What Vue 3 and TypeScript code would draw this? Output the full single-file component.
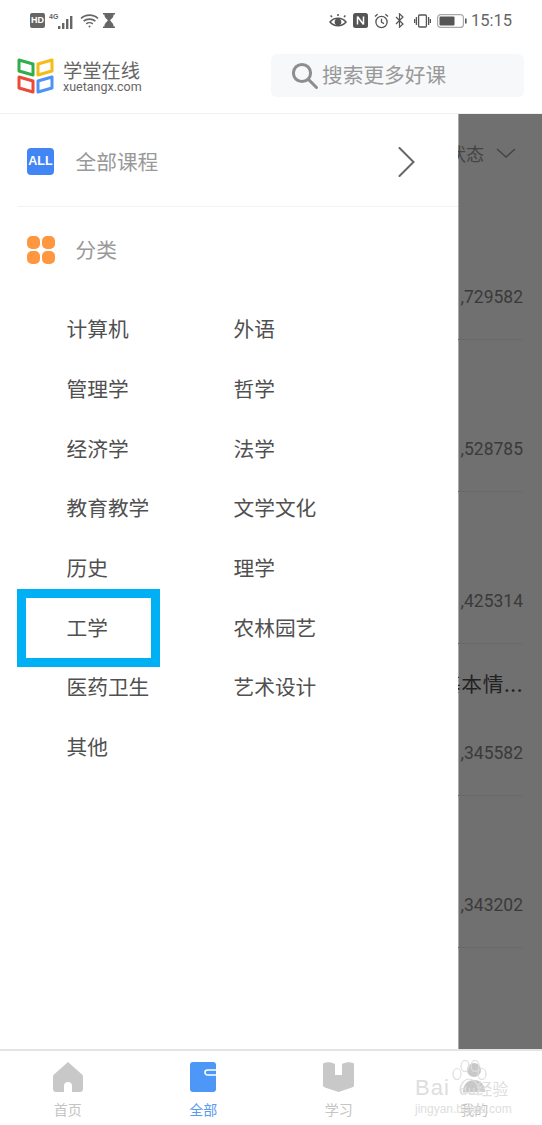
<template>
  <div class="page">
    <div class="status-bar">
      <div class="status-left">
        <span class="hd">HD</span>
        <svg class="signal" width="27" height="18" viewBox="0 0 27 18">
          <text x="0" y="7" class="net">4G</text>
          <rect x="9" y="14" width="2.4" height="3" /><rect x="13" y="11" width="2.4" height="6" />
          <rect x="17" y="7" width="2.4" height="10" /><rect x="21" y="4" width="2.4" height="13" />
        </svg>
        <svg width="19" height="16" viewBox="0 0 19 16" fill="none" stroke="#666" stroke-width="1.6">
          <path d="M1 5.5C5.5 1 13.5 1 18 5.5" /><path d="M3.6 8.2C6.6 5.4 12.4 5.4 15.4 8.2" />
          <path d="M6.2 10.8C8 9.4 11 9.4 12.8 10.8" /><circle cx="9.5" cy="13.6" r="1" fill="#666" stroke="none" />
        </svg>
        <svg width="12" height="15" viewBox="0 0 12 15" fill="#666">
          <path d="M0 0H12V1.6H10.6C10.6 5 8 6 7.2 7.5 8 9 10.6 10 10.6 13.4H12V15H0V13.4H1.4C1.4 10 4 9 4.8 7.5 4 6 1.4 5 1.4 1.6H0Z" />
        </svg>
      </div>
      <div class="status-right">
        <svg width="18" height="14" viewBox="0 0 18 14" fill="none" stroke="#555" stroke-width="1.5">
          <path d="M1 8C5 3 13 3 17 8 13 13 5 13 1 8Z" /><circle cx="9" cy="8" r="2.6" fill="#555" />
          <path d="M3 3 1.6 1.4M9 2V0M15 3l1.4-1.6" />
        </svg>
        <svg width="15" height="15" viewBox="0 0 15 15">
          <rect width="15" height="15" rx="2.5" fill="#555" />
          <path d="M4.5 3.5V11.5M4.5 3.5 10.5 11.5M10.5 3.5V11.5" stroke="#fff" stroke-width="1.5" fill="none" />
        </svg>
        <svg width="15" height="16" viewBox="0 0 15 16" fill="none" stroke="#555" stroke-width="1.3">
          <circle cx="7.5" cy="9" r="5.6" /><path d="M7.5 5.8V9.2L10 10.6M1 3.6 3.6 1.2M14 3.6 11.4 1.2" />
        </svg>
        <svg width="9" height="15" viewBox="0 0 9 15" fill="none" stroke="#555" stroke-width="1.2">
          <path d="M1 4 8 11 4.5 14.2V.8L8 4 1 11" />
        </svg>
        <svg class="vibrate" width="17" height="14" viewBox="0 0 17 14" fill="none" stroke="#555" stroke-width="1.3">
          <rect x="4.6" y="1" width="7.8" height="12" rx="1" /><path d="M2.4 3V11M.6 5V9M14.6 3V11M16.4 5V9" />
        </svg>
        <svg width="30" height="14" viewBox="0 0 30 14">
          <rect x=".6" y=".6" width="25.8" height="12.8" rx="3" fill="none" stroke="#aaa" stroke-width="1.2" />
          <rect x="2.5" y="2.5" width="15" height="9" rx="1" fill="#555" />
          <rect x="28" y="4.5" width="1.6" height="5" fill="#555" />
        </svg>
        <span class="time">15:15</span>
      </div>
    </div>

    <header class="top-bar">
      <div class="logo">
        <svg width="37" height="37" viewBox="0 0 37 37" fill="none" stroke-width="3" stroke-linejoin="round">
          <path d="M2 3 16 7V18L2 14Z" stroke="#2fae4a" />
          <path d="M21 7 35 3V14L21 18Z" stroke="#f6bb16" />
          <path d="M2 20 16 24V35L2 31Z" stroke="#ec4a36" />
          <path d="M21 24 35 20V31L21 35Z" stroke="#4d93f5" />
        </svg>
        <div class="logo-text">
          <div class="logo-cn">学堂在线</div>
          <div class="logo-en">xuetangx.com</div>
        </div>
      </div>
      <div class="search">
        <svg width="29" height="29" viewBox="0 0 29 29" fill="none" stroke="#8e8e8e" stroke-width="3">
          <circle cx="12" cy="12" r="8.6" /><path d="M18.4 18.4 26.5 26.5" stroke-linecap="round" />
        </svg>
        <span class="search-text">搜索更多好课</span>
      </div>
    </header>

    <div class="main">
      <aside class="drawer">
        <div class="all-row">
          <span class="all-icon">ALL</span>
          <span class="row-title">全部课程</span>
          <svg class="chevron" width="17" height="30" viewBox="0 0 17 30" fill="none" stroke="#666" stroke-width="2">
            <path d="M1.5 1 15.5 15 1.5 29" stroke-linecap="round" />
          </svg>
        </div>
        <div class="cat-head">
          <span class="cat-icon"><i></i><i></i><i></i><i></i></span>
          <span class="row-title cat-title">分类</span>
        </div>
        <div class="cat-grid">
          <span v-for="name in categories" :key="name" class="cat-item">{{ name }}</span>
        </div>
        <div class="highlight"></div>
      </aside>

      <div class="backdrop">
        <div class="filter">
          <span class="filter-text">状态</span>
          <svg width="20" height="10" viewBox="0 0 20 10" fill="none" stroke="#444" stroke-width="1.4">
            <path d="M1 1 10 9 19 1" />
          </svg>
        </div>
        <div v-for="row in rows" :key="row.num" class="course">
          <span v-if="row.title" class="course-title">{{ row.title }}</span>
          <span class="course-num">{{ row.num }}</span>
        </div>
      </div>
    </div>

    <nav class="tabs">
      <div class="tab">
        <svg width="30" height="30" viewBox="0 0 30 30" fill="#c8c8c8">
          <path d="M15 0 29 12.5C29.6 13 30 13.8 30 14.6V27A3 3 0 0 1 27 30H19V24A4 4 0 0 0 11 24V30H3A3 3 0 0 1 0 27V14.6C0 13.8.4 13 1 12.5Z" />
        </svg>
        <span>首页</span>
      </div>
      <div class="tab active">
        <svg width="26" height="30" viewBox="0 0 26 30">
          <rect width="26" height="30" rx="3" fill="#4d97f7" />
          <path d="M26 8H17.5A2.5 2.5 0 0 0 17.5 13H26" fill="none" stroke="#fff" stroke-width="1.6" />
        </svg>
        <span>全部</span>
      </div>
      <div class="tab">
        <svg width="31" height="30" viewBox="0 0 31 30" fill="#c8c8c8">
          <path d="M0 1.5C4 -.5 8 0 12 2V13H19V2C23 0 27 -.5 31 1.5V23C31 24.5 30.4 25 29 25.5L15.5 30 2 25.5C.6 25 0 24.5 0 23Z" />
        </svg>
        <span>学习</span>
      </div>
      <div class="tab">
        <svg width="30" height="30" viewBox="0 0 30 30" fill="#c8c8c8">
          <circle cx="15" cy="8" r="7" />
          <path d="M4 30C4 22 9 18 15 18S26 22 26 30Z" />
        </svg>
        <span>我的</span>
      </div>
      <div class="watermark">
        <svg class="paw" width="40" height="36" viewBox="0 0 40 36" fill="none" stroke="#dedede" stroke-width="1.2">
          <ellipse cx="9" cy="14" rx="4" ry="5.5" /><ellipse cx="17" cy="6" rx="4" ry="5.5" />
          <ellipse cx="27" cy="6" rx="4" ry="5.5" /><ellipse cx="34" cy="14" rx="4" ry="5.5" />
          <path d="M12 30C12 24 17 19 21 19S31 24 31 30 24 34 21 33 12 35 12 30Z" />
        </svg>
        <div class="wm-top"><b>Bai</b><b class="wm-du">du</b><em>经验</em></div>
        <div class="wm-url">jingyan.baidu.com</div>
      </div>
    </nav>
  </div>
</template>

<script setup lang="ts">
  const categories: string[] = [
    '计算机', '外语',
    '管理学', '哲学',
    '经济学', '法学',
    '教育教学', '文学文化',
    '历史', '理学',
    '工学', '农林园艺',
    '医药卫生', '艺术设计',
    '其他'
  ]

  interface CourseRow {
    num: string
    title?: string
  }

  const rows: CourseRow[] = [
    { num: ',729582' },
    { num: ',528785' },
    { num: ',425314' },
    { num: ',345582', title: '基本情...' },
    { num: ',343202' }
  ]
</script>

<style>
  body {
    margin: 0;
    background: #fff;
  }
</style>

<style scoped>
  .page {
    width: 542px;
    height: 1125px;
    display: flex;
    flex-direction: column;
    overflow: hidden;
    background: #fff;
    font-family: "Noto Sans CJK SC", "Noto Sans", sans-serif;
  }

  .status-bar {
    height: 38px;
    flex: none;
    display: flex;
    justify-content: space-between;
    align-items: center;
    padding: 3px 30px 0;
    box-sizing: border-box;
  }

  .status-left,
  .status-right {
    display: flex;
    align-items: center;
  }

  .status-left {
    gap: 4px;
  }

  .status-right {
    gap: 6px;
  }

  .hd {
    width: 15px;
    height: 15px;
    border-radius: 2px;
    background: #666;
    color: #fff;
    font: 700 9px/15px "Liberation Sans", sans-serif;
    text-align: center;
  }

  .signal {
    fill: #666;
  }

  .net {
    font: 700 7px "Liberation Sans", sans-serif;
  }

  .vibrate {
    margin-left: 4px;
  }

  .time {
    margin-left: -2px;
    font: 16.5px Roboto, sans-serif;
    color: #666;
  }

  .top-bar {
    height: 76px;
    flex: none;
    box-sizing: border-box;
    display: flex;
    justify-content: space-between;
    align-items: center;
    padding: 0 18px 0 17px;
    border-bottom: 1px solid #f0f0f0;
  }

  .logo {
    display: flex;
    align-items: center;
    gap: 9px;
  }

  .logo-text {
    padding-top: 4px;
  }

  .logo-cn {
    font-size: 19.3px;
    line-height: 16px;
    color: #666;
  }

  .logo-en {
    margin-top: 2px;
    font: 400 12.5px/13px Roboto, sans-serif;
    color: #666;
  }

  .search {
    width: 253px;
    height: 43px;
    box-sizing: border-box;
    padding-left: 19px;
    display: flex;
    align-items: center;
    gap: 3px;
    border-radius: 6px;
    background: #f7f8fa;
    font-size: 20.7px;
    color: #999;
  }

  .search-text {
    margin-top: -3px;
  }

  .main {
    flex: 1;
    display: flex;
    min-height: 0;
  }

  .drawer {
    position: relative;
    width: 458px;
    flex: none;
    padding-left: 18px;
    box-sizing: border-box;
    background: #fff;
  }

  .all-row {
    height: 93px;
    box-sizing: border-box;
    display: flex;
    align-items: center;
    padding: 3px 0 0 9px;
    border-bottom: 1px solid #f2f2f2;
  }

  .all-icon {
    width: 27px;
    height: 27px;
    border-radius: 4px;
    background: #4285f4;
    color: #fff;
    font: 700 12.5px/27px "Liberation Sans", sans-serif;
    text-align: center;
  }

  .row-title {
    margin: -2px 0 0 21.5px;
    font-size: 20.7px;
    color: #999;
  }

  .cat-title {
    margin-left: 20.5px;
  }

  .chevron {
    margin-left: auto;
    margin-right: 43px;
  }

  .cat-head {
    height: 86px;
    display: flex;
    align-items: center;
    padding-left: 9px;
  }

  .cat-icon {
    width: 28px;
    height: 28px;
    display: grid;
    grid-template-columns: 1fr 1fr;
    gap: 2px;
  }

  .cat-icon i {
    border-radius: 5px;
    background: #ff9640;
  }

  .cat-grid {
    display: grid;
    grid-template-columns: 167px 167px;
    grid-auto-rows: 59.7px;
    align-items: center;
    margin-top: 5.5px;
    padding-left: 48.5px;
  }

  .cat-item {
    font-size: 20.7px;
    color: #505050;
  }

  .highlight {
    position: absolute;
    left: 17px;
    top: 475px;
    width: 143px;
    height: 78px;
    box-sizing: border-box;
    border: 9px solid #00b0f5;
  }

  .backdrop {
    flex: 1;
    min-width: 0;
    overflow: hidden;
    padding-right: 19px;
    background: #707070;
    color: #3a3a3a;
    box-shadow: inset 1px 0 0 #a8a8a8;
  }

  .filter {
    height: 74px;
    display: flex;
    align-items: center;
    justify-content: flex-end;
    gap: 12px;
    margin-right: 7px;
    padding-top: 4px;
    box-sizing: border-box;
    white-space: nowrap;
    font-size: 18px;
    color: #444;
  }

  .filter svg,
  .filter-text {
    flex: none;
  }

  .course {
    height: 152px;
    box-sizing: border-box;
    position: relative;
    display: flex;
    flex-direction: column;
    justify-content: flex-end;
    align-items: flex-end;
    padding-bottom: 31px;
    border-bottom: 1px solid #696969;
    white-space: nowrap;
  }

  .course-title {
    margin-bottom: 44px;
    font-size: 20.7px;
    line-height: 30px;
    letter-spacing: 0.6px;
    color: #222;
  }

  .course-num {
    font: 17.5px/22px Roboto, sans-serif;
  }

  .tabs {
    position: relative;
    height: 76px;
    flex: none;
    box-sizing: border-box;
    display: flex;
    padding-top: 11px;
    border-top: 2px solid #e4e4e4;
    background: #fff;
  }

  .tab {
    flex: 1;
    display: flex;
    flex-direction: column;
    align-items: center;
    gap: 7px;
    font-size: 14px;
    line-height: 20px;
    color: #c4c4c4;
  }

  .tab.active {
    color: #5b9bef;
  }

  .watermark {
    position: absolute;
    left: 415px;
    top: 9px;
    width: 100px;
    color: #dedede;
    font-family: "Liberation Sans", sans-serif;
  }

  .paw {
    position: absolute;
    left: 33px;
    top: 0;
  }

  .wm-top {
    position: relative;
    margin-top: 17px;
    font-size: 22px;
    line-height: 22px;
    white-space: nowrap;
  }

  .wm-top b {
    font-weight: 400;
    letter-spacing: 1px;
  }

  .wm-du {
    margin-left: 10px;
    font-size: 13px;
  }

  .wm-top em {
    margin-left: 0;
    font-style: normal;
    font-size: 16px;
    font-family: "Noto Sans CJK SC", sans-serif;
  }

  .wm-url {
    position: relative;
    margin-top: 0;
    font-size: 12px;
    line-height: 14px;
    white-space: nowrap;
  }
</style>
